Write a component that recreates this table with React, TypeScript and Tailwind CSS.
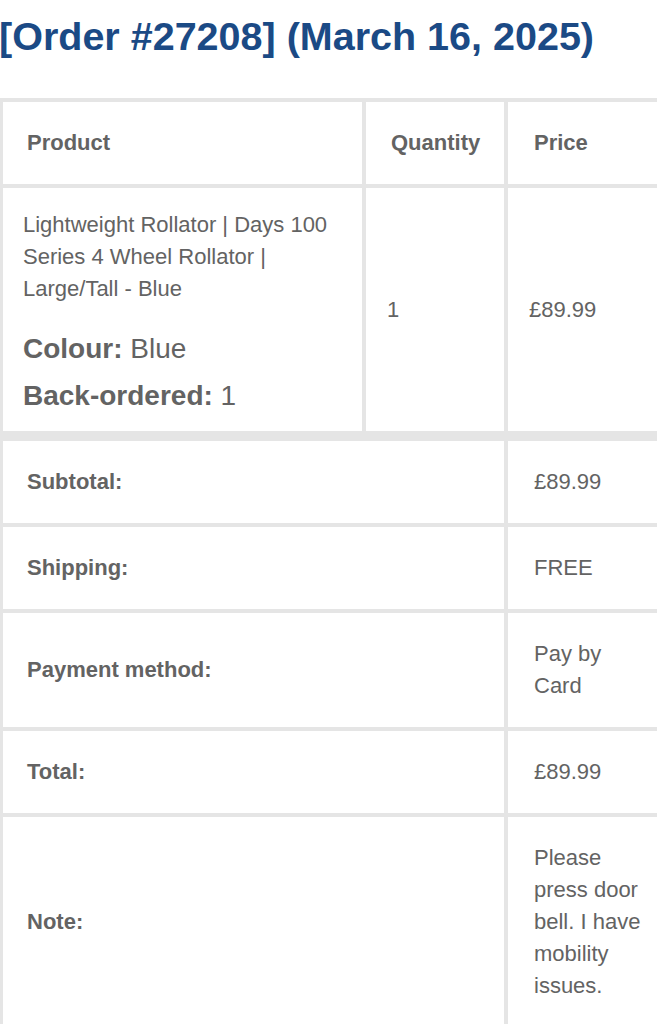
import React from "react";

export default function App() {
  const font = { fontFamily: '"Liberation Sans", Arial, Helvetica, sans-serif' };
  return (
    <div
      className="w-[657px] h-[1024px] overflow-hidden bg-white text-[#636363] font-['Liberation_Sans',Arial,sans-serif]"
      style={font}
    >
      <h1 className="mt-[13px] ml-[-1px] whitespace-nowrap text-[39.5px] leading-[47px] font-bold text-[#1b4a85]">
        [Order #27208] (March 16, 2025)
      </h1>

      <div className="mt-[38px] w-[700px] bg-[#e5e5e5] pl-[3px] pt-[4px]">
        {/* header + product */}
        <div className="grid grid-cols-[359px_138px_190px] gap-[4px]">
          <div className="bg-white pl-[24px] py-[25px] text-[22px] leading-[32px] font-bold">Product</div>
          <div className="bg-white pl-[25px] py-[25px] text-[22px] leading-[32px] font-bold">Quantity</div>
          <div className="bg-white pl-[26px] py-[25px] text-[22px] leading-[32px] font-bold">Price</div>

          <div className="bg-white pl-[20px] pr-[20px] pt-[21px] pb-[15px]">
            <div className="text-[22px] leading-[32px]">
              Lightweight Rollator | Days 100 Series 4 Wheel Rollator | Large/Tall - Blue
            </div>
            <div className="mt-[24px] text-[28px] leading-[40px]">
              <span className="font-bold">Colour:</span> Blue
            </div>
            <div className="mt-[7px] text-[28px] leading-[40px]">
              <span className="font-bold">Back-ordered:</span> 1
            </div>
          </div>
          <div className="bg-white pl-[21px] flex items-center text-[22px] leading-[32px]">1</div>
          <div className="bg-white pl-[21px] flex items-center text-[22px] leading-[32px]">£89.99</div>
        </div>

        {/* totals */}
        <div className="mt-[10px] grid grid-cols-[501px_190px] gap-[4px]">
          {[
            ["Subtotal:", "£89.99"],
            ["Shipping:", "FREE"],
            ["Payment method:", "Pay by Card"],
            ["Total:", "£89.99"],
            ["Note:", "Please press door bell. I have mobility issues."],
          ].map(([label, value]) => (
            <React.Fragment key={label}>
              <div className="bg-white pl-[24px] flex items-center text-[22px] leading-[32px] font-bold">
                {label}
              </div>
              <div className="bg-white pl-[26px] py-[25px] text-[22px] leading-[32px]">
                <div className="w-[112px]">{value}</div>
              </div>
            </React.Fragment>
          ))}
        </div>
      </div>
    </div>
  );
}
